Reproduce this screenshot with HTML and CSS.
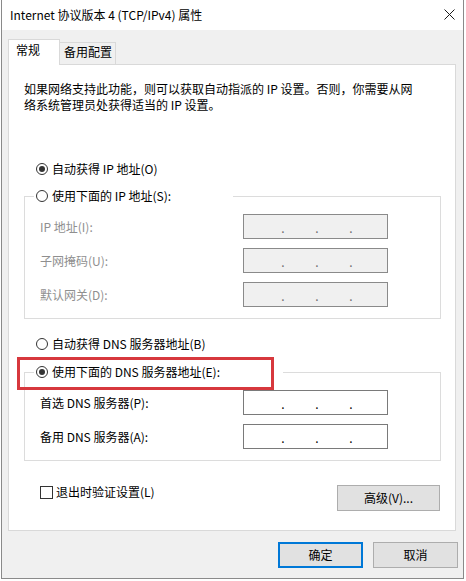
FILE: index.html
```html
<!DOCTYPE html>
<html lang="zh-CN">
<head>
<meta charset="utf-8">
<title>Internet 协议版本 4 (TCP/IPv4) 属性</title>
<link rel="stylesheet" href="styles.css">
</head>
<body>
<div class="window">
  <div class="titlebar">
    <span class="title">Internet 协议版本 4 (TCP/IPv4) 属性</span>
    <svg class="close" width="11" height="11" viewBox="0 0 11 11"><path d="M0.5 0.5L10.5 10.5M10.5 0.5L0.5 10.5" stroke="#1a1a1a" stroke-width="1"/></svg>
  </div>
  <div class="tabs">
    <div class="tab active">常规</div>
    <div class="tab">备用配置</div>
  </div>
  <div class="panel">
    <p class="desc">如果网络支持此功能，则可以获取自动指派的 IP 设置。否则，你需要从网<br>络系统管理员处获得适当的 IP 设置。</p>

    <div class="option first"><span class="radio checked"></span><span>自动获得 IP 地址(O)</span></div>

    <fieldset class="group group-ip">
      <legend class="legend legend-ip"><span class="radio"></span><span>使用下面的 IP 地址(S):</span></legend>
      <div class="field disabled"><span class="label">IP 地址(I):</span><span class="ipbox"><span class="dot">.</span><span class="dot">.</span><span class="dot">.</span></span></div>
      <div class="field disabled"><span class="label">子网掩码(U):</span><span class="ipbox"><span class="dot">.</span><span class="dot">.</span><span class="dot">.</span></span></div>
      <div class="field disabled"><span class="label">默认网关(D):</span><span class="ipbox"><span class="dot">.</span><span class="dot">.</span><span class="dot">.</span></span></div>
    </fieldset>

    <div class="option dns-auto"><span class="radio"></span><span>自动获得 DNS 服务器地址(B)</span></div>

    <fieldset class="group group-dns">
      <legend class="legend legend-dns"><span class="radio checked"></span><span>使用下面的 DNS 服务器地址(E):</span></legend>
      <div class="field"><span class="label">首选 DNS 服务器(P):</span><span class="ipbox"><span class="dot">.</span><span class="dot">.</span><span class="dot">.</span></span></div>
      <div class="field"><span class="label">备用 DNS 服务器(A):</span><span class="ipbox"><span class="dot">.</span><span class="dot">.</span><span class="dot">.</span></span></div>
    </fieldset>

    <div class="bottom-row">
      <label class="check"><span class="checkbox"></span><span>退出时验证设置(L)</span></label>
      <button class="btn btn-adv">高级(V)...</button>
    </div>

    <div class="highlight"></div>
  </div>
  <div class="actions">
    <button class="btn btn-ok">确定</button>
    <button class="btn">取消</button>
  </div>
</div>
</body>
</html>
```
FILE: styles.css
```css
* { box-sizing: border-box; }
html, body { margin: 0; padding: 0; background: #ffffff; }
body {
  font-family: "Noto Sans CJK SC", "Noto Sans", sans-serif;
  font-size: 12px;
  line-height: 16px;
  color: #000;
}
.window {
  margin-left: 1px;
  width: 463px;
  height: 579px;
  background: #f0f0f0;
  border: 1px solid #8a8a8a;
  border-top: none;
  display: flex;
  flex-direction: column;
}
.titlebar {
  height: 30px;
  background: #fff;
  display: flex;
  align-items: center;
  justify-content: space-between;
  padding-left: 8px;
  padding-right: 8px;
  flex: none;
}
.title { color: #000; }
.close { display: block; margin-top: -1px; }
.tabs {
  margin-top: 9px;
  margin-left: 6px;
  height: 25px;
  display: flex;
  align-items: flex-end;
  flex: none;
}
.tab {
  border: 1px solid #d9d9d9;
  border-bottom: none;
  background: #f0f0f0;
  height: 22px;
  width: 57px;
  margin-left: -1px;
  padding: 1px 0 0 4px;
}
.tab.active {
  margin-left: 0;
  width: 52px;
  height: 26px;
  margin-bottom: -1px;
  background: #fff;
  padding: 2px 0 0 7px;
  position: relative;
  z-index: 1;
}
.panel {
  position: relative;
  margin-left: 6px;
  width: 448px;
  height: 467px;
  background: #fff;
  border: 1px solid #d9d9d9;
  flex: none;
}
.desc {
  margin: 16px 0 0 15px;
  line-height: 16px;
  white-space: nowrap;
}
.option {
  display: flex;
  align-items: center;
  height: 16px;
  margin-left: 27px;
}
.option.first { margin-top: 48px; }
.option.dns-auto { margin-top: 17px; }
.radio {
  width: 12px;
  height: 12px;
  border: 1px solid #333;
  border-radius: 50%;
  background: #fff;
  margin-right: 4px;
  position: relative;
  flex: none;
}
.radio.checked::after {
  content: "";
  position: absolute;
  left: 2px;
  top: 2px;
  width: 6px;
  height: 6px;
  border-radius: 50%;
  background: #333;
}
.group {
  margin: 0 0 0 15px;
  width: 417px;
  border: 1px solid #dcdcdc;
  padding: 10px 0 11px 0;
  min-width: 0;
}
.group-ip { margin-top: 11px; }
.group-dns { margin-top: 12px; }
.legend {
  display: flex;
  align-items: center;
  height: 16px;
  margin-left: 9px;
  padding: 0 0 0 2px;
  background: #fff;
}
.legend-ip { width: 199px; }
.legend-dns { width: 249px; }
.field {
  display: flex;
  align-items: center;
  height: 25px;
  padding-left: 15px;
}
.field + .field { margin-top: 9px; }
.label { width: 203px; flex: none; }
.ipbox {
  width: 145px;
  height: 25px;
  border: 1px solid #7a7a7a;
  background: #fff;
  display: flex;
  align-items: center;
  padding-left: 22px;
}
.dot {
  width: 34px;
  text-align: center;
  color: #000;
  line-height: 16px;
  margin-top: 2px;
}
.field.disabled .label { color: #8f8f8f; }
.field.disabled .ipbox { background: #f0f0f0; border-color: #8a8a8a; }
.field.disabled .dot { color: #6d6d6d; }
.bottom-row {
  margin-top: 24px;
  display: flex;
  justify-content: space-between;
  align-items: flex-start;
  padding-left: 31px;
  padding-right: 15px;
}
.check {
  display: flex;
  align-items: center;
  height: 14px;
}
.checkbox {
  width: 13px;
  height: 13px;
  border: 1px solid #333;
  background: #fff;
  margin-right: 3px;
  flex: none;
}
.btn {
  font-family: inherit;
  font-size: 12px;
  line-height: 16px;
  color: #000;
  background: #e1e1e1;
  border: 1px solid #adadad;
  height: 26px;
  width: 85px;
  padding: 0;
  border-radius: 0;
}
.btn-adv { width: 103px; }
.btn-ok { border: 2px solid #0078d7; }
.actions {
  margin-top: 11px;
  display: flex;
  justify-content: flex-end;
  gap: 10px;
  padding-right: 5px;
}
.highlight {
  position: absolute;
  left: 8px;
  top: 292px;
  width: 257px;
  height: 33px;
  border: 3px solid #d7383d;
  pointer-events: none;
}
```
